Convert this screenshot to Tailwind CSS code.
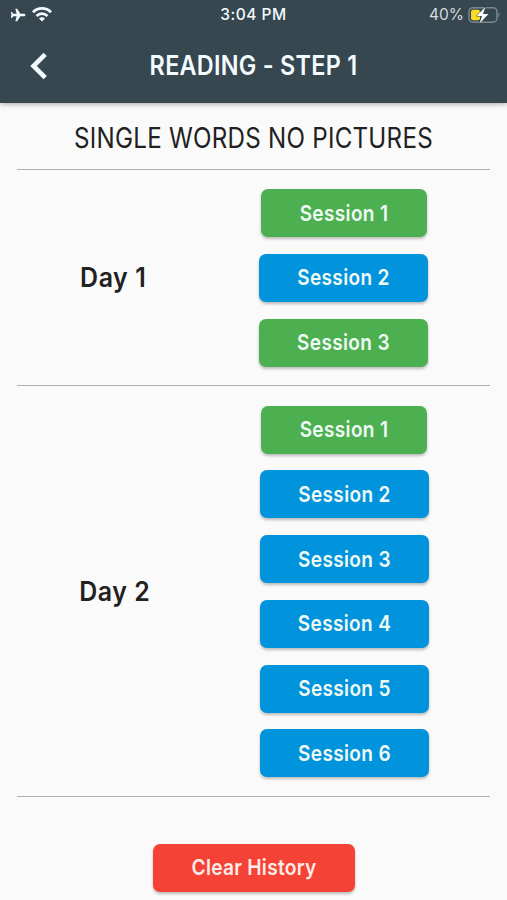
<!DOCTYPE html>
<html lang="en">
<head>
<meta charset="utf-8">
<title>Reading - Step 1</title>
<script src="https://cdn.jsdelivr.net/npm/@tailwindcss/browser@4"></script>
</head>
<body class="w-[507px] h-[900px] overflow-hidden bg-[#fafafa] font-['Inter',sans-serif] text-[#212121] flex flex-col">
<header class="h-[103px] shrink-0 bg-[#37474f] shadow-[0_1px_5px_rgba(0,0,0,0.35)] flex flex-col text-[#f3fbff]">
  <div class="h-[29px] grid grid-cols-[1fr_auto_1fr] items-center pl-[10px] pr-[7px]">
    <div class="flex items-center gap-[6px]">
      <svg class="w-[16px] h-[14px]" viewBox="0 0 16 14" fill="currentColor"><path d="M15.5 7c0-.7-.8-1.3-1.8-1.3h-3.4L7.200.8H5.400l1.200 4.900H3.300L1.900 3.900H.9l.5 3.100-.5 3.100h1l1.400-1.800h3.300l-1.200 4.900h1.800l3.100-4.900h3.400c1 0 1.800-.6 1.800-1.300z"/></svg>
      <svg class="w-[20px] h-[15px]" viewBox="0 0 20 15" fill="none" stroke="currentColor" stroke-width="2.7"><path d="M1 5.200C6 .2 14 .2 19 5.200"/><path d="M4.500 8.900c3.200-3 7.800-3 11 0"/><path d="M7 11.400c1.800-1.500 4.200-1.500 6 0L10 14.500z" fill="currentColor" stroke="none"/></svg>
    </div>
    <div class="whitespace-nowrap text-[15.5px] font-medium tracking-[0.5px] pr-[3px]">3:04 PM</div>
    <div class="flex items-center justify-end gap-[4px] text-[15.5px] text-[#d3dce0]"><span>40%</span>
      <svg class="w-[32px] h-[18px]" viewBox="0 0 32 18"><rect x="1" y="1.700" width="28" height="14.500" rx="4" fill="none" stroke="#7c888e" stroke-width="1.500"/><path d="M30.500 6.500c1.500.7 1.500 4 0 4.700z" fill="#7c888e"/><rect x="3" y="3.700" width="9" height="10.500" rx="2" fill="#f8dc25"/><path d="M17.300 1L8.500 10H14l-2.500 7.500L20.500 8H15z" fill="#fff" stroke="#37474f" stroke-width="1" paint-order="stroke"/></svg>
    </div>
  </div>
  <div class="h-[73px] grid grid-cols-[60px_1fr_60px] items-center">
    <svg class="w-[18px] h-[28px] ml-[30px]" viewBox="0 0 18 28" fill="none" stroke="currentColor" stroke-width="4.6"><path d="M15.200 2.300L3.500 14l11.700 11.700"/></svg>
    <h1 class="text-center whitespace-nowrap text-[26.5px] font-semibold tracking-[0.3px] scale-x-[0.883]">READING - STEP 1</h1>
  </div>
</header>
<main class="px-[17px] flex flex-col">
  <h2 class="h-[66px] pt-[3px] flex items-center justify-center whitespace-nowrap text-[28px] tracking-[0.3px] scale-x-[0.862]">SINGLE WORDS NO PICTURES</h2>
  <section class="h-[216px] border-t-[1.5px] border-[#b0b0b0] grid grid-cols-[193px_1fr] pt-[19px]">
    <h3 class="text-center text-[26.5px] font-semibold tracking-[0.6px] h-[178px] flex items-center justify-center"><span class="block scale-x-[0.94]">Day 1</span></h3>
    <div class="flex flex-col items-center gap-[16.8px] w-[170px] ml-[48.5px] text-[22px] tracking-[0.4px] font-semibold text-[#effaf5]">
      <button class="w-[166px] h-[48px] shrink-0 rounded-[7px] bg-[#4caf50] shadow-[0_2px_3px_rgba(0,0,0,0.25)]"><span class="block scale-x-[0.865]">Session 1</span></button>
      <button class="w-[169px] h-[48px] shrink-0 rounded-[7px] bg-[#0293dd] shadow-[0_2px_3px_rgba(0,0,0,0.25)]"><span class="block scale-x-[0.865]">Session 2</span></button>
      <button class="w-[169px] h-[48px] shrink-0 rounded-[7px] bg-[#4caf50] shadow-[0_2px_3px_rgba(0,0,0,0.25)]"><span class="block scale-x-[0.865]">Session 3</span></button>
    </div>
  </section>
  <section class="h-[412px] border-y-[1.5px] border-[#b0b0b0] grid grid-cols-[195px_1fr] pt-[19.5px]">
    <h3 class="text-center text-[26.5px] font-semibold tracking-[0.6px] h-[372px] flex items-center justify-center"><span class="block scale-x-[0.94]">Day 2</span></h3>
    <div class="flex flex-col items-center gap-[16.8px] w-[170px] ml-[47.3px] text-[22px] tracking-[0.4px] font-semibold text-[#effaf5]">
      <button class="w-[166px] h-[48px] shrink-0 rounded-[7px] bg-[#4caf50] shadow-[0_2px_3px_rgba(0,0,0,0.25)]"><span class="block scale-x-[0.865]">Session 1</span></button>
      <button class="w-[169px] h-[48px] shrink-0 rounded-[7px] bg-[#0293dd] shadow-[0_2px_3px_rgba(0,0,0,0.25)]"><span class="block scale-x-[0.865]">Session 2</span></button>
      <button class="w-[169px] h-[48px] shrink-0 rounded-[7px] bg-[#0293dd] shadow-[0_2px_3px_rgba(0,0,0,0.25)]"><span class="block scale-x-[0.865]">Session 3</span></button>
      <button class="w-[169px] h-[48px] shrink-0 rounded-[7px] bg-[#0293dd] shadow-[0_2px_3px_rgba(0,0,0,0.25)]"><span class="block scale-x-[0.865]">Session 4</span></button>
      <button class="w-[169px] h-[48px] shrink-0 rounded-[7px] bg-[#0293dd] shadow-[0_2px_3px_rgba(0,0,0,0.25)]"><span class="block scale-x-[0.865]">Session 5</span></button>
      <button class="w-[169px] h-[48px] shrink-0 rounded-[7px] bg-[#0293dd] shadow-[0_2px_3px_rgba(0,0,0,0.25)]"><span class="block scale-x-[0.865]">Session 6</span></button>
    </div>
  </section>
  <button class="self-center mt-[46.5px] w-[202px] h-[48px] shrink-0 rounded-[7px] bg-[#f44336] shadow-[0_2px_3px_rgba(0,0,0,0.25)] text-[22px] tracking-[0.3px] font-semibold text-[#ffebe8]"><span class="block scale-x-[0.872] whitespace-nowrap">Clear History</span></button>
</main>
</body>
</html>
